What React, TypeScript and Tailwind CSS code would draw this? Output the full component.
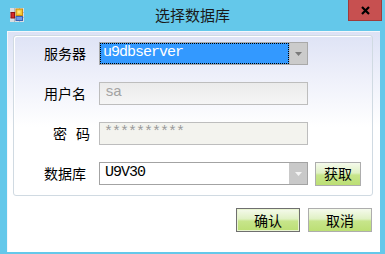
function AppIcon() {
  return (
    <svg width="14" height="14" viewBox="0 0 14 14">
      <rect x="0" y="0" width="14" height="14" fill="#d9dde2" />
      <path d="M0 4.5H14M0 9.5H14M4.5 0V14M9.5 0V14" stroke="#b4b9c0" strokeWidth="1" />
      <rect x="6" y="1" width="6.5" height="6.5" fill="#f6c531" stroke="#c98d12" strokeWidth="1" />
      <rect x="7.5" y="2.5" width="3" height="3" fill="#fde27a" />
      <rect x="1" y="4.5" width="3.5" height="5.5" fill="#d8282a" stroke="#8e1414" strokeWidth="1" />
      <rect x="6" y="8.5" width="6.5" height="4" fill="#6e9ae6" stroke="#3a62b4" strokeWidth="1" />
    </svg>
  )
}

function Arrow({ light }: { light?: boolean }) {
  return (
    <svg width="7" height="4" viewBox="0 0 7 4">
      <path d="M0 0H7L3.5 4Z" fill={light ? '#f4f4f4' : '#7a7a7a'} />
    </svg>
  )
}

function GreenButton({ label, width, isDefault }: { label: string; width: string; isDefault?: boolean }) {
  return (
    <div
      className={`${width} h-[24px] flex items-center justify-center text-[14px] text-black border ${
        isDefault ? 'border-[#6f6f6f] shadow-[inset_0_0_0_1px_#e8f4d0]' : 'border-[#adadad]'
      } bg-[linear-gradient(#f5faec,#e0f1c4_45%,#c7e58b_55%,#bcdf74)]`}
    >
      {label}
    </div>
  )
}

export default function App() {
  return (
    <div className="w-[385px] h-[254px] bg-[#64c8ea] flex flex-col overflow-hidden font-['Noto_Sans_CJK_SC',sans-serif]">
      <div className="h-[31px] grid grid-cols-[1fr_auto_1fr]">
        <div className="pl-[10px] pt-[8px]">
          <AppIcon />
        </div>
        <div className="pt-[5px] text-[15px] leading-[20px] text-[#1a1a1a]">选择数据库</div>
        <div className="flex justify-end pr-[3px]">
          <div className="w-[34px] h-[21px] bg-[#c75050] border border-t-0 border-[#9e3b3b] flex items-center justify-center">
            <svg width="9" height="9" viewBox="0 0 9 9">
              <path d="M1 1L8 8M8 1L1 8" stroke="#000" strokeWidth="2.2" />
            </svg>
          </div>
        </div>
      </div>

      <div className="ml-[7px] w-[373px] h-[221px] border-l border-t border-[#f4f7fc] bg-[linear-gradient(#dde2f5,#eef0fa_45px,#ffffff_95px)] pt-[3px] pl-[5px]">
        <div className="w-[360px] h-[161px] rounded-[3px] border border-[#d0dae2] shadow-[inset_1px_1px_0_#ffffff] pt-[6px] flex flex-col gap-[17px]">
          <div className="h-[23px] flex items-center">
            <div className="w-[76px] pr-[4px] text-right text-[14px] text-black">服务器</div>
            <div className="ml-[9px] w-[209px] h-[23px] border border-[#a9a9a9] flex bg-white">
              <div className="flex-1 border border-dotted border-black bg-[#3399ff] text-white flex items-center pl-[2px] font-['Liberation_Mono',monospace] text-[15px] tracking-[-1px]">
                u9dbserver
              </div>
              <div className="w-[18px] bg-[#cbcbcb] border-l border-[#b8b8b8] flex items-center justify-center">
                <Arrow />
              </div>
            </div>
          </div>

          <div className="h-[23px] flex items-center">
            <div className="w-[76px] pr-[4px] text-right text-[14px] text-black">用户名</div>
            <div className="ml-[9px] w-[209px] h-[23px] border border-[#bdbdbd] bg-[linear-gradient(#ebebeb,#f5f5f5)] flex items-center pl-[5px] font-['Liberation_Mono',monospace] text-[15px] tracking-[-1px] text-[#a3a3a3]">
              sa
            </div>
          </div>

          <div className="h-[23px] flex items-center">
            <div className="w-[76px] text-right text-[14px] text-black">
              密<span className="ml-[9px]">码</span>
            </div>
            <div className="ml-[9px] w-[209px] h-[23px] border border-[#bdbdbd] bg-[#f3f3ee] flex items-center pl-[4px] font-['Liberation_Mono',monospace] text-[15px] tracking-[-1px] text-[#9a9a9a]">
              **********
            </div>
          </div>

          <div className="h-[23px] flex items-center">
            <div className="w-[76px] pr-[4px] text-right text-[14px] text-black">数据库</div>
            <div className="ml-[9px] w-[209px] h-[23px] border border-[#a3a3a3] bg-white flex">
              <div className="flex-1 flex items-center pl-[5px] font-['Liberation_Mono',monospace] text-[15px] tracking-[-1px] text-black">
                U9V30
              </div>
              <div className="w-[18px] bg-[#c9c9c9] flex items-center justify-center">
                <Arrow light />
              </div>
            </div>
            <div className="ml-[7px]">
              <GreenButton label="获取" width="w-[46px]" />
            </div>
          </div>
        </div>

        <div className="mt-[12px] flex justify-end gap-[8px] pr-[8px]">
          <GreenButton label="确认" width="w-[64px]" isDefault />
          <GreenButton label="取消" width="w-[64px]" />
        </div>
      </div>
    </div>
  )
}
